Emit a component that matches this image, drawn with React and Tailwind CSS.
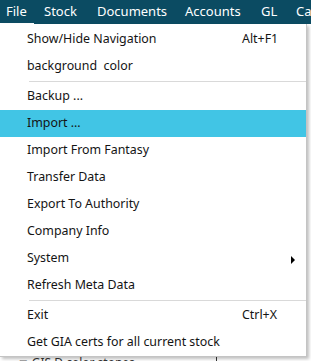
import React from "react";

const topMenus = [
  { label: "File", w: "w-[38px]" },
  { label: "Stock", w: "w-[53px]" },
  { label: "Documents", w: "w-[88px]" },
  { label: "Accounts", w: "w-[76px]" },
  { label: "GL", w: "w-[35px]" },
  { label: "Catalog", w: "w-[60px]" },
];

const MenuItem = ({ label, shortcut, active, submenu }) => (
  <div
    className={`relative flex h-[27px] items-center pl-[27px] ${
      active ? "bg-[#41c5e5]" : ""
    }`}
  >
    <span className="flex-1 whitespace-pre">{label}</span>
    {shortcut && <span className="w-[64px] whitespace-nowrap">{shortcut}</span>}
    {submenu && (
      <span className="absolute right-[11px] top-[11px] h-0 w-0 border-y-[4px] border-l-[4px] border-y-transparent border-l-black" />
    )}
  </div>
);

const Separator = () => (
  <div className="flex h-[3px] items-center pl-[29px]">
    <div className="h-px w-full bg-[#d9d9d9]" />
  </div>
);

export default function App() {
  return (
    <div className="relative h-[361px] w-[311px] overflow-hidden bg-white font-['Noto_Sans','Open_Sans',sans-serif]">
      {/* menu bar */}
      <div className="flex h-[24px] items-center bg-[#0b4b62] pl-[6px] text-[13px] text-white">
        {topMenus.map((m, i) => (
          <div
            key={m.label}
            className={`relative flex h-full shrink-0 items-center whitespace-nowrap ${m.w}`}
          >
            {m.label}
            {i === 0 && <span className="absolute bottom-0 left-[-6px] h-px w-[34px] bg-white" />}
          </div>
        ))}
      </div>

      {/* content behind the menu */}
      <div className="mt-[332px] flex h-[6px] items-start text-[12px] text-[#333]">
        <div className="flex w-[217px] items-center gap-1 border-r border-[#333] pl-[4px] leading-[14px]">
          <span className="text-[8px] text-[#999]">·····</span>
          <span className="text-[9px] text-[#666]">▣</span>
          <span>GIS D color stones</span>
        </div>
      </div>

      {/* dropdown */}
      <div className="absolute left-0 top-[24px] w-[307px] border-r border-b border-[#c4c4c4] bg-white pt-[2px] text-[12.4px] text-[#141414] shadow-[2px_2px_3px_rgba(0,0,0,0.25)]">
        <MenuItem label="Show/Hide Navigation" shortcut="Alt+F1" />
        <MenuItem label="background  color" />
        <Separator />
        <MenuItem label="Backup ..." />
        <MenuItem label="Import ..." active />
        <MenuItem label="Import From Fantasy" />
        <MenuItem label="Transfer Data" />
        <MenuItem label="Export To Authority" />
        <MenuItem label="Company Info" />
        <MenuItem label="System" submenu />
        <MenuItem label="Refresh Meta Data" />
        <Separator />
        <MenuItem label="Exit" shortcut="Ctrl+X" />
        <MenuItem label="Get GIA certs for all current stock" />
      </div>
    </div>
  );
}
